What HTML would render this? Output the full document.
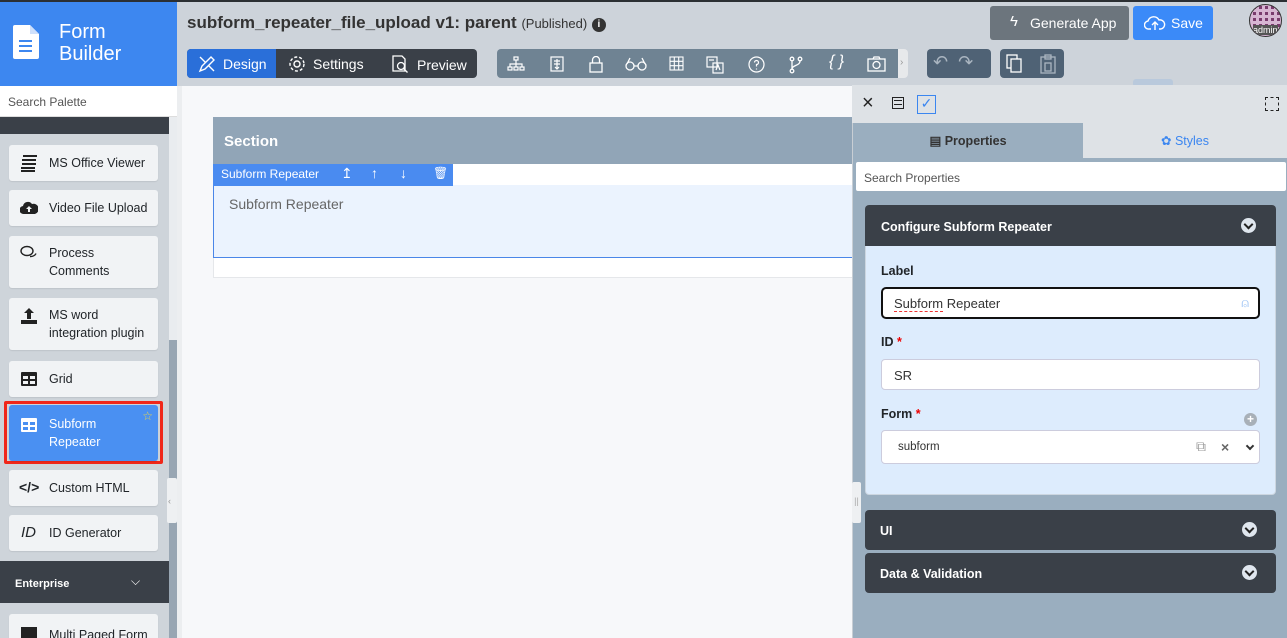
<!DOCTYPE html>
<html style="overflow:hidden;width:1287px;height:638px"><head><meta charset="utf-8"><style>
*{box-sizing:border-box;margin:0;padding:0}
body{width:1287px;height:638px;overflow:hidden;font-family:"Liberation Sans",sans-serif;background:#cdd3da;position:relative;font-size:13px;color:#212529}
.a{position:absolute}
.item{position:absolute;left:9px;width:149px;background:#f1f3f5;border-radius:3px;box-shadow:0 1px 1px rgba(0,0,0,.08);font-size:12.5px;color:#212529;line-height:18px}
.item .ic{position:absolute;left:11px;width:18px;height:18px}
.item .t{position:absolute;left:40px}
svg{display:block}
.tb svg{position:absolute;top:7px}
.dk{background:#3a4048;color:#fff;font-weight:bold;border-radius:4px}
.chev{position:absolute;right:19px;width:15px;height:15px;border-radius:50%;background:#dfe6ee}
.chev:after{content:"";position:absolute;left:4px;top:3px;width:5px;height:5px;border-right:2px solid #222;border-bottom:2px solid #222;transform:rotate(45deg)}
</style></head><body>
<div class="a" style="left:0;top:0;width:1287px;height:2px;background:#2b2f33"></div>
<div class="a" style="left:0;top:2px;width:177px;height:84px;background:#3d87f0"></div>
<svg class="a" style="left:13px;top:25px" width="26" height="34" viewBox="0 0 26 34"><path d="M2 0h15l9 9v23a2 2 0 0 1-2 2H2a2 2 0 0 1-2-2V2a2 2 0 0 1 2-2z" fill="#fff"/><path d="M17 0v9h9" fill="#cfe0fb"/><rect x="6" y="15" width="13" height="2" fill="#3d87f0"/><rect x="6" y="20" width="13" height="2" fill="#3d87f0"/><rect x="6" y="25" width="13" height="2" fill="#3d87f0"/></svg>
<div class="a" style="left:59px;top:21px;color:#fff;font-size:20px;line-height:22px">Form<br>Builder</div>
<div class="a" style="left:0;top:86px;width:177px;height:31px;background:#fff;border-bottom:1px solid #ddd;padding:9px 8px;font-size:12px;color:#555">Search Palette</div>
<div class="a" style="left:0;top:117px;width:169px;height:17px;background:#3a4048"></div>
<div class="a" style="left:0;top:134px;width:169px;height:504px;background:#ced4da"></div>
<div class="a" style="left:169px;top:117px;width:8px;height:521px;background:#e9ecef"></div>
<div class="a" style="left:169px;top:340px;width:8px;height:298px;background:#98a6b3"></div>
<div class="a" style="left:167px;top:478px;width:10px;height:45px;background:#eef0f2;border-radius:2px;color:#999;font-size:9px;padding:18px 0 0 1px">‹</div>

<div class="item" style="top:145px;height:36px"><svg class="ic" style="top:9px" viewBox="0 0 18 18"><g fill="#222"><rect x="3" y="1" width="14" height="2"/><rect x="2" y="5" width="14" height="2"/><rect x="2" y="9" width="14" height="2"/><rect x="1" y="13" width="14" height="2"/><rect x="1" y="16" width="14" height="2"/></g></svg><span class="t" style="top:9px">MS Office Viewer</span></div>
<div class="item" style="top:190px;height:36px"><svg class="ic" style="top:9px" viewBox="0 0 18 18"><path d="M4 15a4 4 0 0 1-1-8 5 5 0 0 1 9-2 4 4 0 0 1 3 10z" fill="#222"/><path d="M9 7l-3 3h2v3h2v-3h2z" fill="#f1f3f5"/></svg><span class="t" style="top:9px">Video File Upload</span></div>
<div class="item" style="top:236px;height:52px"><svg class="ic" style="top:8px" viewBox="0 0 18 18"><g fill="none" stroke="#222" stroke-width="1.4"><ellipse cx="7" cy="7" rx="6" ry="4.5"/><path d="M10 12.5a6 4.5 0 0 0 6-3"/></g></svg><span class="t" style="top:8px">Process<br>Comments</span></div>
<div class="item" style="top:298px;height:52px"><svg class="ic" style="top:9px" viewBox="0 0 18 18"><g fill="#222"><path d="M9 1l-5 5h3v6h4V6h3z"/><rect x="1" y="13" width="16" height="4"/></g></svg><span class="t" style="top:8px">MS word<br>integration plugin</span></div>
<div class="item" style="top:361px;height:36px"><svg class="ic" style="top:9px" viewBox="0 0 18 18"><rect x="1" y="2" width="16" height="14" rx="1" fill="#222"/><g fill="#f1f3f5"><rect x="3" y="6" width="5" height="3"/><rect x="10" y="6" width="5" height="3"/><rect x="3" y="11" width="5" height="3"/><rect x="10" y="11" width="5" height="3"/></g></svg><span class="t" style="top:9px">Grid</span></div>
<div class="a" style="left:4px;top:401px;width:159px;height:63px;border:3px solid #f0271a;border-radius:2px"></div>
<div class="item" style="top:405px;height:56px;background:#4a90f2;color:#fff"><svg class="ic" style="top:11px" viewBox="0 0 18 18"><rect x="1" y="2" width="16" height="14" rx="1" fill="#fff"/><g fill="#4a90f2"><rect x="3" y="6" width="5" height="3"/><rect x="10" y="6" width="5" height="3"/><rect x="3" y="11" width="5" height="3"/><rect x="10" y="11" width="5" height="3"/></g></svg><span class="t" style="top:10px">Subform<br>Repeater</span><span class="a" style="right:5px;top:2px;color:#e7d44a;font-size:12px">☆</span></div>
<div class="item" style="top:470px;height:36px"><span class="ic" style="top:8px;left:10px;font-weight:bold;font-size:14px;width:auto">&lt;/&gt;</span><span class="t" style="top:9px">Custom HTML</span></div>
<div class="item" style="top:515px;height:36px"><span class="ic" style="top:9px;left:12px;font-style:italic;font-size:15px;width:auto">ID</span><span class="t" style="top:9px">ID Generator</span></div>
<div class="a" style="left:0;top:561px;width:169px;height:42px;background:#3a4048;color:#fff;font-weight:bold;font-size:11px;padding:17px 15px">Enterprise<span style="position:absolute;left:131px;top:13px;font-weight:normal;font-size:12px">⌵</span></div>
<div class="item" style="top:614px;height:24px;border-radius:3px 3px 0 0"><svg class="ic" style="top:11px" viewBox="0 0 18 18"><rect x="1" y="2" width="16" height="12" fill="#222"/></svg><span class="t" style="top:12px">Multi Paged Form</span></div>

<div class="a" style="left:187px;top:13px;font-size:17px;font-weight:bold;color:#333">subform_repeater_file_upload v1: parent <span style="font-weight:normal;font-size:13px">(Published)</span> <span style="display:inline-block;width:14px;height:14px;border-radius:50%;background:#333;color:#fff;font-size:10px;text-align:center;line-height:14px;vertical-align:1px">i</span></div>
<div class="a dk" style="left:187px;top:49px;width:290px;height:29px;font-weight:normal"></div>
<div class="a" style="left:187px;top:49px;width:89px;height:29px;background:#2a6fd9;border-radius:4px 0 0 4px"></div>
<svg class="a" style="left:198px;top:55px" width="18" height="18" viewBox="0 0 18 18" fill="none" stroke="#fff" stroke-width="1.4"><path d="M2 16l2-5 9-9 3 3-9 9z M2 2l5 5 M11 11l5 5"/></svg>
<div class="a" style="left:223px;top:56px;color:#fff;font-size:14px">Design</div>
<svg class="a" style="left:288px;top:55px" width="18" height="18" viewBox="0 0 18 18" fill="none" stroke="#fff" stroke-width="1.4"><circle cx="9" cy="9" r="3"/><circle cx="9" cy="9" r="7" stroke-dasharray="3 2"/></svg>
<div class="a" style="left:313px;top:56px;color:#fff;font-size:14px">Settings</div>
<svg class="a" style="left:390px;top:54px" width="20" height="20" viewBox="0 0 20 20" fill="none" stroke="#fff" stroke-width="1.3"><path d="M3 2h9l3 3v12H3z"/><circle cx="11" cy="12" r="3.5"/><path d="M13.5 14.5l4 4"/></svg>
<div class="a" style="left:417px;top:57px;color:#fff;font-size:14px">Preview</div>

<div class="a tb" style="left:497px;top:49px;width:401px;height:29px;background:#6f8393;border-radius:4px 0 0 4px">
<svg style="left:10px" width="18" height="16" viewBox="0 0 18 16" fill="none" stroke="#fff" stroke-width="1.2"><rect x="7" y="1" width="4" height="3"/><rect x="1" y="11" width="4" height="3"/><rect x="7" y="11" width="4" height="3"/><rect x="13" y="11" width="4" height="3"/><path d="M9 4v7M3 11V8h12v3"/></svg>
<svg style="left:53px" width="14" height="16" viewBox="0 0 14 16" fill="none" stroke="#fff" stroke-width="1.2"><rect x="1" y="1" width="12" height="14"/><path d="M7 3v10M4 5h6M4 8h6M5 11l2 2 2-2"/></svg>
<svg style="left:92px" width="14" height="17" viewBox="0 0 14 17" fill="none" stroke="#fff" stroke-width="1.3"><rect x="1" y="7" width="12" height="9"/><path d="M3.5 7V4a3.5 3.5 0 0 1 7 0v3"/></svg>
<svg style="left:128px" width="22" height="16" viewBox="0 0 22 16" fill="none" stroke="#fff" stroke-width="1.3"><circle cx="5" cy="10" r="4"/><circle cx="17" cy="10" r="4"/><path d="M9 10h4M2 8l3-6M20 8l-3-6"/></svg>
<svg style="left:172px" width="15" height="15" viewBox="0 0 15 15" fill="none" stroke="#fff" stroke-width="1.1"><rect x="1" y="1" width="13" height="13"/><path d="M5.3 1v13M9.7 1v13M1 5.3h13M1 9.7h13"/></svg>
<svg style="left:209px" width="18" height="18" viewBox="0 0 18 18" fill="none" stroke="#fff" stroke-width="1.2"><rect x="1" y="1" width="10" height="10"/><rect x="7" y="7" width="10" height="10"/><path d="M3 4h5M10 14l2-5 2 5"/></svg>
<svg style="left:251px" width="17" height="17" viewBox="0 0 17 17" fill="none" stroke="#fff" stroke-width="1.2"><circle cx="8.5" cy="8.5" r="7.5"/><path d="M6.5 6.5a2 2 0 1 1 2 2v2M8.5 12.5v1"/></svg>
<svg style="left:292px" width="14" height="18" viewBox="0 0 14 18" fill="none" stroke="#fff" stroke-width="1.3"><circle cx="3" cy="3" r="1.8"/><circle cx="11" cy="3" r="1.8"/><circle cx="3" cy="15" r="1.8"/><path d="M3 5v8M11 5c0 5-8 4-8 8"/></svg>
<div style="position:absolute;left:332px;top:4px;color:#fff;font-size:16px;font-style:italic">{ }</div>
<svg style="left:370px" width="19" height="16" viewBox="0 0 19 16" fill="none" stroke="#fff" stroke-width="1.3"><rect x="1" y="3" width="17" height="12"/><circle cx="9.5" cy="9" r="3.5"/><path d="M6 3l1-2h5l1 2"/></svg>
</div>
<div class="a" style="left:898px;top:49px;width:10px;height:29px;background:#e7e9eb;border-radius:0 4px 4px 0;color:#999;font-size:10px;padding:8px 0 0 2px">›</div>
<div class="a" style="left:927px;top:49px;width:64px;height:29px;background:#4f6275;border-radius:4px"></div>
<div class="a" style="left:933px;top:52px;color:#aab5c0;font-size:18px">↶&nbsp;&nbsp;↷</div>
<div class="a" style="left:1000px;top:49px;width:64px;height:29px;background:#4f6275;border-radius:4px"></div>
<svg class="a" style="left:1006px;top:54px" width="18" height="20" viewBox="0 0 18 20" fill="none" stroke="#fff" stroke-width="1.3"><rect x="1" y="1" width="10" height="13"/><rect x="5" y="5" width="10" height="13" fill="#4f6275"/></svg>
<svg class="a" style="left:1040px;top:54px" width="16" height="20" viewBox="0 0 16 20" fill="none" stroke="#aab5c0" stroke-width="1.3"><rect x="1" y="3" width="14" height="16"/><rect x="5" y="1" width="6" height="4"/><rect x="5" y="9" width="6" height="8"/></svg>

<div class="a" style="left:990px;top:6px;width:139px;height:34px;background:#6c757d;border-radius:3px;color:#fff;font-size:14px;padding:9px 0 0 40px">Generate App</div>
<div class="a" style="left:1010px;top:13px;color:#fff;font-size:15px">ϟ</div>
<div class="a" style="left:1133px;top:6px;width:80px;height:34px;background:#3b8af8;border-radius:3px;color:#fff;font-size:14px;padding:9px 0 0 38px">Save</div>
<svg class="a" style="left:1144px;top:15px" width="22" height="16" viewBox="0 0 22 16" fill="none" stroke="#fff" stroke-width="1.4"><path d="M7 14H5a4 4 0 0 1-1-8 6 6 0 0 1 11-1 4.5 4.5 0 0 1 2 9h-2M11 15V8M8 10l3-3 3 3"/></svg>
<div class="a" style="left:1249px;top:4px;width:33px;height:33px;border-radius:50%;background:#7a3b6e;border:1px solid #333;overflow:hidden;background-image:repeating-linear-gradient(90deg,#d7b5d3 0 3px,transparent 3px 6px),repeating-linear-gradient(0deg,#d7b5d3 0 3px,transparent 3px 6px)"><span style="position:absolute;left:3px;top:20px;color:#fff;font-size:9px;background:#555">admin</span></div>
<div class="a" style="left:1133px;top:79px;width:40px;height:8px;background:#b9c9dc;border-radius:3px"></div>

<div class="a" style="left:177px;top:86px;width:675px;height:552px;background:#f7f8fa;border-left:5px solid #eceef0"></div>
<div class="a" style="left:213px;top:117px;width:640px;height:161px;background:#fff;border:1px solid #e5e7ea"></div>
<div class="a" style="left:213px;top:117px;width:640px;height:47px;background:#91a5b7;color:#fff;font-weight:bold;font-size:15px;padding:16px 11px">Section</div>
<div class="a" style="left:213px;top:185px;width:640px;height:73px;background:#ebf3fe;border:1px solid #4a86e8;border-top:none;color:#666;font-size:14px;padding:11px 15px">Subform Repeater</div>
<div class="a" style="left:213px;top:164px;width:240px;height:22px;background:#4a8bf0;color:#fff;font-size:12px;padding:3px 8px">Subform Repeater<span style="position:absolute;left:128px;top:1px;font-size:14px">↥</span><span style="position:absolute;left:158px;top:1px;font-size:14px">↑</span><span style="position:absolute;left:187px;top:1px;font-size:14px">↓</span><span style="position:absolute;left:220px;top:2px">🗑</span></div>

<div class="a" style="left:852px;top:85px;width:435px;height:553px;background:#9aaebf;border-left:1px solid #c8ced4"></div>
<div class="a" style="left:852px;top:85px;width:435px;height:38px;background:#dee2e6"></div>
<div class="a" style="left:862px;top:93px;font-size:20px;color:#222;line-height:20px">×</div>
<div class="a" style="left:892px;top:97px;width:12px;height:12px;border:1.5px solid #222"><div style="margin:2px 1px;height:5px;border-top:1.5px solid #222;border-bottom:1.5px solid #222"></div></div>
<div class="a" style="left:917px;top:95px;width:19px;height:19px;border:1.5px solid #3b86f0;color:#3b86f0;font-size:14px;line-height:15px;text-align:center">✓</div>
<div class="a" style="left:1265px;top:97px;width:14px;height:14px;border:1.5px dashed #222"></div>
<div class="a" style="left:853px;top:123px;width:230px;height:35px;background:#9aaebf;border-radius:3px 3px 0 0;text-align:center;font-weight:bold;font-size:12.5px;color:#333;padding-top:10px">▤ Properties</div>
<div class="a" style="left:1083px;top:123px;width:204px;height:35px;background:#dee2e6;text-align:center;font-size:12.5px;color:#3b86f0;padding-top:10px">✿ Styles</div>
<div class="a" style="left:856px;top:162px;width:430px;height:29px;background:#fff;border-radius:2px;font-size:12px;color:#555;padding:9px 8px">Search Properties</div>
<div class="a" style="left:865px;top:205px;width:411px;height:290px;background:#ddecfd;border:1px solid #ccd6e0;border-radius:4px"></div>
<div class="a dk" style="left:865px;top:205px;width:411px;height:41px;border-radius:4px 4px 0 0;font-size:12.5px;padding:15px 16px">Configure Subform Repeater<div class="chev" style="top:13px;right:20px"></div></div>
<div class="a" style="left:881px;top:264px;font-weight:bold;font-size:12.5px">Label</div>
<div class="a" style="left:881px;top:287px;width:379px;height:32px;background:#fff;border:2px solid #111;border-radius:5px;font-size:13px;color:#333;padding:7px 11px"><span style="border-bottom:1px dashed #e33">Subform</span> Repeater<span style="position:absolute;right:9px;top:6px;color:#9cc3f5">⍝</span></div>
<div class="a" style="left:881px;top:335px;font-weight:bold;font-size:12.5px">ID <span style="color:#e00">*</span></div>
<div class="a" style="left:881px;top:359px;width:379px;height:31px;background:#fff;border:1px solid #ccd;border-radius:4px;font-size:13px;color:#333;padding:8px 12px">SR</div>
<div class="a" style="left:881px;top:407px;font-weight:bold;font-size:12.5px">Form <span style="color:#e00">*</span></div>
<div class="a" style="left:1244px;top:413px;width:13px;height:13px;border-radius:50%;background:#a8b0b8;color:#fff;font-size:12px;line-height:12px;text-align:center;font-weight:bold">+</div>
<div class="a" style="left:881px;top:430px;width:379px;height:34px;background:#fff;border:1px solid #ccd;border-radius:4px;font-size:11.5px;color:#333;padding:10px 16px">subform<span style="position:absolute;left:314px;top:7px;color:#999;font-size:14px">⧉</span><span style="position:absolute;left:339px;top:8px;color:#666;font-size:14px;font-weight:bold">×</span><span style="position:absolute;left:365px;top:12px;width:6px;height:6px;border-right:2px solid #333;border-bottom:2px solid #333;transform:rotate(45deg)"></span></div>
<div class="a dk" style="left:865px;top:510px;width:411px;height:40px;font-size:12.5px;padding:14px 15px">UI<div class="chev" style="top:12px"></div></div>
<div class="a dk" style="left:865px;top:553px;width:411px;height:40px;font-size:12.5px;padding:14px 15px">Data &amp; Validation<div class="chev" style="top:12px"></div></div>
<div class="a" style="left:852px;top:482px;width:9px;height:41px;background:#eef0f2;border-radius:2px;color:#aaa;font-size:9px;padding-top:14px;text-align:center">||</div>
</body></html>
